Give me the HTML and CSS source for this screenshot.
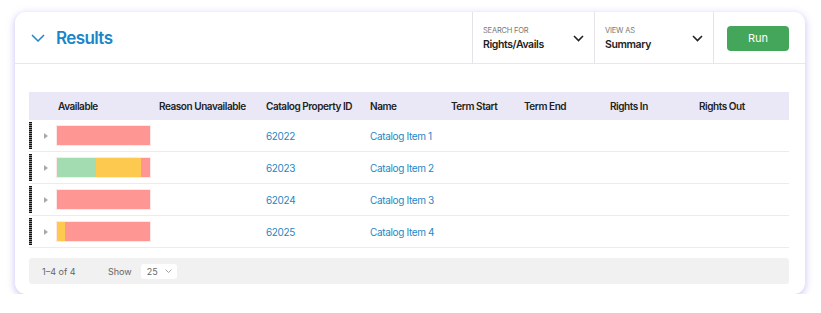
FILE: index.html
```html
<!DOCTYPE html>
<html lang="en">
<head>
  <meta charset="UTF-8" />
  <title>Results</title>
  <link rel="stylesheet" href="styles.css">
</head>
<body>
  <div class="card">
    <div class="card-header">
      <div class="title-area">
        <svg class="collapse-icon" width="14" height="8" viewBox="0 0 14 8"><path d="M1 1l6 6 6-6" fill="none" stroke="#1a86c9" stroke-width="1.5"/></svg>
        <h1>Results</h1>
      </div>
      <div class="picker picker-search">
        <div>
          <div class="picker-label">SEARCH FOR</div>
          <div class="picker-value">Rights/Avails</div>
        </div>
        <svg width="11" height="7" viewBox="0 0 11 7"><path d="M1 1l4.5 4.5L10 1" fill="none" stroke="#222" stroke-width="1.6"/></svg>
      </div>
      <div class="picker picker-view">
        <div>
          <div class="picker-label">VIEW AS</div>
          <div class="picker-value">Summary</div>
        </div>
        <svg width="11" height="7" viewBox="0 0 11 7"><path d="M1 1l4.5 4.5L10 1" fill="none" stroke="#222" stroke-width="1.6"/></svg>
      </div>
      <div class="run-area">
        <button class="run-btn">Run</button>
      </div>
    </div>

    <div class="card-body">
      <div class="grid">
        <div class="row head">
          <span></span>
          <span class="first">Available</span>
          <span>Reason Unavailable</span>
          <span>Catalog Property ID</span>
          <span>Name</span>
          <span>Term Start</span>
          <span>Term End</span>
          <span>Rights In</span>
          <span>Rights Out</span>
        </div>

        <div class="row">
          <span class="lead"><i class="grip"></i><i class="caret"></i></span>
          <span class="avail"><b class="seg red" style="width:100%"></b></span>
          <span></span>
          <a href="#">62022</a>
          <a href="#">Catalog Item 1</a>
          <span></span><span></span><span></span><span></span>
        </div>

        <div class="row">
          <span class="lead"><i class="grip"></i><i class="caret"></i></span>
          <span class="avail"><b class="seg green" style="width:42%"></b><b class="seg yellow" style="width:48%"></b><b class="seg red" style="width:10%"></b></span>
          <span></span>
          <a href="#">62023</a>
          <a href="#">Catalog Item 2</a>
          <span></span><span></span><span></span><span></span>
        </div>

        <div class="row">
          <span class="lead"><i class="grip"></i><i class="caret"></i></span>
          <span class="avail"><b class="seg red" style="width:100%"></b></span>
          <span></span>
          <a href="#">62024</a>
          <a href="#">Catalog Item 3</a>
          <span></span><span></span><span></span><span></span>
        </div>

        <div class="row">
          <span class="lead"><i class="grip"></i><i class="caret"></i></span>
          <span class="avail"><b class="seg yellow" style="width:9%"></b><b class="seg red" style="width:91%"></b></span>
          <span></span>
          <a href="#">62025</a>
          <a href="#">Catalog Item 4</a>
          <span></span><span></span><span></span><span></span>
        </div>
      </div>

      <div class="pager">
        <span class="count">1–4 of 4</span>
        <span class="show">Show</span>
        <span class="page-size">25
          <svg width="7" height="4" viewBox="0 0 7 4"><path d="M0.5 0.5l3 3 3-3" fill="none" stroke="#999" stroke-width="0.9"/></svg>
        </span>
      </div>
    </div>
  </div>
</body>
</html>
```

FILE: styles.css
```css
* {
  box-sizing: border-box;
  margin: 0;
  padding: 0;
}

body {
  font-family: 'Inter', 'Liberation Sans', sans-serif;
  background: #fff;
  color: #222;
  padding: 12px 16px 0 15px;
}

.card {
  width: 790px;
  height: 282px;
  background: #fff;
  border-radius: 11px;
  box-shadow: 0 2px 7px 1px rgba(140, 120, 235, 0.38);
  overflow: hidden;
}

.card-header {
  display: flex;
  height: 52px;
  border-bottom: 1px solid #e8e8ec;
}

.title-area {
  flex: 1;
  display: flex;
  align-items: center;
  gap: 11px;
  padding-left: 16px;
}

.collapse-icon {
  margin-top: 1px;
}

h1 {
  font-size: 17px;
  font-weight: 600;
  color: #1a86c9;
  letter-spacing: -0.6px;
}

.picker {
  display: flex;
  align-items: center;
  justify-content: space-between;
  border-left: 1px solid #e4e4e8;
  padding: 2px 10px 0 10px;
}

.picker-search { width: 122px; }
.picker-view { width: 119px; }

.picker svg {
  margin-top: -1px;
}

.picker-label {
  font-size: 7.5px;
  color: #777;
  letter-spacing: -0.2px;
  margin-bottom: 3px;
}

.picker-value {
  font-size: 10.5px;
  font-weight: 600;
  color: #222;
  letter-spacing: -0.4px;
}

.run-area {
  width: 92px;
  border-left: 1px solid #e4e4e8;
  display: flex;
  align-items: center;
  padding: 1px 0 0 13px;
}

.run-btn {
  width: 62px;
  height: 25px;
  background: #43a65a;
  color: #fff;
  border: none;
  border-radius: 4px;
  font-family: inherit;
  font-size: 11px;
}

.card-body {
  padding: 28px 16px 11px 14px;
}

.grid {
  width: 760px;
}

.row {
  display: grid;
  grid-template-columns: 27px 103px 107px 104px 81px 73px 86px 89px 90px;
  align-items: center;
  height: 32px;
  border-bottom: 1px solid #ececec;
  font-size: 10px;
}

.row.head {
  height: 28px;
  background: #eae8f6;
  border-bottom: none;
  font-weight: 600;
  color: #222;
  letter-spacing: -0.45px;
}

.row.head .first {
  padding-left: 2px;
}

.row a {
  color: #2587c6;
  text-decoration: none;
  letter-spacing: -0.35px;
}

.lead {
  display: flex;
  align-items: center;
  height: 100%;
  padding: 2px 0;
}

.grip {
  width: 3px;
  height: 100%;
  background: repeating-linear-gradient(to bottom, #111 0 1px, #888 1px 2px);
}

.caret {
  margin-left: 12px;
  width: 0;
  height: 0;
  border-left: 4px solid #aaa;
  border-top: 3px solid transparent;
  border-bottom: 3px solid transparent;
}

.avail {
  display: flex;
  width: 95px;
  height: 21px;
  margin-top: -1px;
  border: 1px solid rgba(255, 215, 215, 0.6);
}

.seg { display: block; height: 100%; }
.seg.red { background: #fe9794; }
.seg.green { background: #a3dcb0; }
.seg.yellow { background: #fdca4f; }

.pager {
  display: flex;
  align-items: center;
  height: 26px;
  margin-top: 10px;
  background: #f1f1f1;
  border-radius: 3px;
  padding-left: 13px;
  font-size: 9px;
  color: #666;
}

.count {
  width: 66px;
}

.show {
  margin-right: 9px;
}

.page-size {
  display: flex;
  align-items: center;
  gap: 7px;
  height: 15px;
  width: 36px;
  padding-left: 6px;
  background: #fff;
  border-radius: 3px;
}
```
